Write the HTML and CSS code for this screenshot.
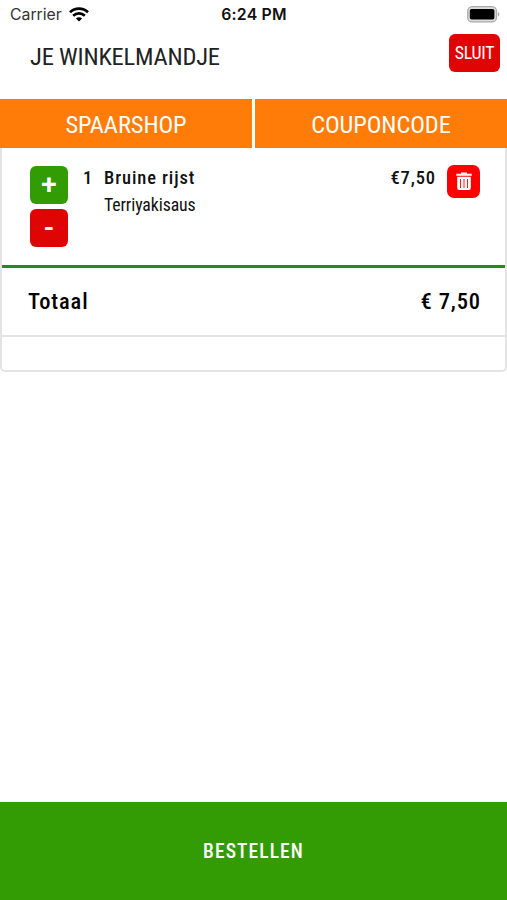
FILE: index.html
```html
<!DOCTYPE html>
<html lang="nl">
<head>
    <meta charset="UTF-8">
    <meta name="viewport" content="width=device-width, initial-scale=1.0">
    <title>Je winkelmandje</title>
    <link rel="stylesheet" href="styles.css">
</head>
<body>
    <div class="status-bar">
        <div class="carrier">
            <span>Carrier</span>
            <svg width="20" height="15" viewBox="0 0 20 15" fill="none" stroke="#000" stroke-width="2.6">
                <path d="M1 5.3C6 .4 14 .4 19 5.3"/>
                <path d="M4.2 8.8c3.3-3.2 8.3-3.2 11.6 0"/>
                <path d="M10 14.5 6.9 11.4c1.8-1.7 4.4-1.7 6.2 0z" fill="#000" stroke="none"/>
            </svg>
        </div>
        <div class="time">6:24 PM</div>
        <svg class="battery" width="33" height="17" viewBox="0 0 33 17">
            <rect x=".7" y=".7" width="28.8" height="15.2" rx="4.5" fill="#ddd" stroke="#aaa" stroke-width="1.3"/>
            <rect x="2.8" y="3" width="24.6" height="10.6" rx="1.8" fill="#000"/>
            <path d="M31 6v4.6c1.8-.8 1.8-3.8 0-4.6z" fill="#aaa"/>
        </svg>
    </div>

    <header class="header">
        <h1>JE WINKELMANDJE</h1>
        <button class="btn-close">SLUIT</button>
    </header>

    <nav class="tabs">
        <button class="tab">SPAARSHOP</button>
        <button class="tab">COUPONCODE</button>
    </nav>

    <main class="cart">
        <div class="cart-item">
            <div class="amount-buttons">
                <button class="btn-amount plus">+</button>
                <button class="btn-amount minus">-</button>
            </div>
            <div class="amount">1</div>
            <div class="product">
                <div class="product-name">Bruine rijst</div>
                <div class="product-option">Terriyakisaus</div>
            </div>
            <div class="price">€7,50</div>
            <button class="btn-delete" aria-label="Verwijder">
                <svg width="16" height="19" viewBox="0 0 16 19">
                    <path d="M5 1.8V.5h6v1.3h4.7v2H.3v-2z" fill="#fff"/>
                    <path d="M1.2 4.8h13.6V16a2 2 0 0 1-2 2H3.2a2 2 0 0 1-2-2z" fill="#fff"/>
                    <path d="M4.5 7v9M8 7v9M11.5 7v9" stroke="#f00" stroke-width=".9"/>
                </svg>
            </button>
        </div>
        <div class="total">
            <span>Totaal</span>
            <span class="total-price">€ 7,50</span>
        </div>
        <div class="cart-footer"></div>
    </main>

    <button class="btn-order">BESTELLEN</button>
</body>
</html>
```

FILE: styles.css
```css
:root {
    --green: #339c04;
    --red: #df0505;
    --orange: #ff7c08;
    --line: #e4e4e4;
}

* {
    box-sizing: border-box;
    margin: 0;
    padding: 0;
}

body {
    display: flex;
    flex-direction: column;
    height: 100vh;
    overflow: hidden;
    background-color: #fff;
    color: #111;
    font-family: 'Roboto Condensed', Roboto, sans-serif;
    font-stretch: 75%;
}

button {
    border: none;
    color: #fff;
    font-family: inherit;
    font-stretch: inherit;
    cursor: pointer;
}

.status-bar {
    display: grid;
    grid-template-columns: 1fr auto 1fr;
    align-items: center;
    height: 29px;
    padding: 0 7px 0 10px;
    font-family: Inter, sans-serif;
    font-stretch: 100%;
    font-size: 15.8px;
}

.carrier {
    display: flex;
    align-items: center;
    gap: 7px;
    color: #333;
}

.time {
    margin-right: 2px;
    font-weight: 600;
    letter-spacing: 0.2px;
}

.battery {
    justify-self: end;
}

.header {
    display: flex;
    justify-content: space-between;
    align-items: flex-start;
    height: 70px;
    padding: 5px 7px 0 30px;
}

h1 {
    margin-top: 8px;
    font-size: 24.5px;
    font-weight: 400;
    line-height: 29px;
    letter-spacing: -0.2px;
    color: #222;
}

.btn-close {
    width: 51px;
    height: 38px;
    padding-bottom: 1px;
    border-radius: 6px;
    background-color: var(--red);
    font-size: 17.8px;
    letter-spacing: -0.2px;
}

.tabs {
    display: grid;
    grid-template-columns: 1fr 1fr;
    gap: 3px;
    height: 49px;
}

.tab {
    padding-top: 2px;
    background-color: var(--orange);
    font-size: 24.5px;
    letter-spacing: -0.1px;
}

.cart {
    height: 224px;
    border: 2px solid var(--line);
    border-top: none;
    border-radius: 0 0 5px 5px;
}

.cart-item {
    display: flex;
    align-items: flex-start;
    height: 120px;
    padding: 17px 25px 0 28px;
    border-bottom: 3px solid #228b22;
}

.amount-buttons {
    display: flex;
    flex-direction: column;
    gap: 5px;
    margin-top: 1px;
}

.btn-amount {
    width: 38px;
    height: 38px;
    border-radius: 6px;
    font-family: Roboto, sans-serif;
    font-size: 28px;
    font-stretch: 100%;
    font-weight: 600;
    line-height: 38px;
}

.plus {
    background-color: var(--green);
}

.minus {
    background-color: var(--red);
}

.amount,
.product-name,
.price {
    font-size: 18.5px;
    font-weight: 500;
    line-height: 26px;
    letter-spacing: 0.9px;
}

.amount {
    width: 36px;
    padding-left: 15px;
}

.product {
    flex: 1;
}

.product-option {
    margin-top: 1px;
    font-size: 17.8px;
    line-height: 26px;
    letter-spacing: -0.1px;
}

.btn-delete {
    display: flex;
    justify-content: center;
    align-items: center;
    width: 33px;
    height: 33px;
    margin-left: 11px;
    border-radius: 7px;
    background-color: #f00;
}

.total {
    display: flex;
    justify-content: space-between;
    height: 69px;
    padding: 0 24px 0 26px;
    border-bottom: 2px solid var(--line);
    color: #000;
    font-size: 22.5px;
    font-weight: 500;
    line-height: 67px;
    letter-spacing: 0.9px;
}

.btn-order {
    height: 98px;
    margin-top: auto;
    background-color: var(--green);
    font-size: 19.5px;
    font-weight: 500;
    letter-spacing: 1.1px;
}
```
